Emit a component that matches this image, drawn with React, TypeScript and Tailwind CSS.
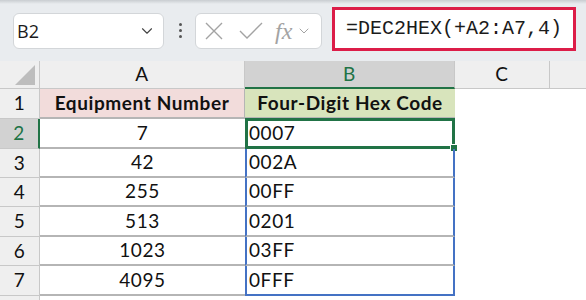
import { ChevronDown } from "lucide-react";

const rows = [
  { n: 2, a: "7", b: "0007", h: "h-[30px]" },
  { n: 3, a: "42", b: "002A", h: "h-[29px]" },
  { n: 4, a: "255", b: "00FF", h: "h-[29px]" },
  { n: 5, a: "513", b: "0201", h: "h-[30px]" },
  { n: 6, a: "1023", b: "03FF", h: "h-[29px]" },
  { n: 7, a: "4095", b: "0FFF", h: "h-[30px]" },
];

const cellFont = "font-['Lato','Liberation_Sans',sans-serif] text-[19px] tracking-[0.6px] text-[#111]";

export default function App() {
  return (
    <div className="w-[586px] h-[300px] overflow-hidden bg-white">
      {/* formula bar */}
      <div className="relative h-[61px] bg-[#e9ecef] flex items-start">
        <div className="absolute top-0 left-0 right-0 h-[4px] bg-gradient-to-b from-[#c9cdd1] to-[#e9ecef]" />
        <div className="ml-[13px] mt-[13px] w-[151px] h-[36px] bg-white border border-[#d3d6d9] rounded-[6px] flex items-center pl-[3px] pr-[7px]">
          <span className="font-['Open_Sans','Liberation_Sans',sans-serif] text-[18px] text-[#1b1b1b] flex-1">B2</span>
          <ChevronDown size={18} strokeWidth={1.5} className="text-[#444]" />
        </div>
        <div className="ml-[15px] mt-[23px] flex flex-col gap-[3px]">
          <span className="w-[3px] h-[3px] rounded-full bg-[#555]" />
          <span className="w-[3px] h-[3px] rounded-full bg-[#555]" />
          <span className="w-[3px] h-[3px] rounded-full bg-[#555]" />
        </div>
        <div className="ml-[13px] mt-[13px] w-[127px] h-[36px] bg-white border border-[#d3d6d9] rounded-[6px] flex items-center pl-[9px]">
          <svg width="18" height="18" viewBox="0 0 18 18" className="mr-[16px]">
            <path d="M1 1 L17 17 M17 1 L1 17" stroke="#a3a3a3" strokeWidth="1.4" fill="none" />
          </svg>
          <svg width="24" height="18" viewBox="0 0 24 18" className="mr-[12px]">
            <path d="M1 9 L8 16 L23 1" stroke="#a3a3a3" strokeWidth="1.4" fill="none" />
          </svg>
          <span className="font-['Liberation_Serif',serif] italic text-[24px] text-[#a3a3a3] leading-none mr-[4px]">fx</span>
          <ChevronDown size={16} strokeWidth={1.5} className="text-[#a3a3a3]" />
        </div>
        <div className="ml-[10px] mt-[7px] w-[244px] h-[44px] border-[3px] border-[#dc1d48] bg-white flex items-center pl-[11px]">
          <span className="font-['Liberation_Mono',monospace] text-[20px] text-[#1b1b1b]">=DEC2HEX(+A2:A7,4)</span>
        </div>
      </div>

      {/* column headers */}
      <div className={`flex h-[28px] bg-[#efefef] border-b border-[#c8c8c8] ${cellFont}`}>
        <div className="w-[40px] border-r border-[#c8c8c8] flex items-end justify-end pr-[4px] pb-[3px]">
          <svg width="20" height="20" viewBox="0 0 20 20">
            <path d="M20 0 L20 20 L0 20 Z" fill="#bdbdbd" />
          </svg>
        </div>
        <div className="w-[205px] border-r border-[#c8c8c8] flex items-center justify-center">A</div>
        <div className="w-[210px] bg-[#d2d2d2] border-r border-[#c8c8c8] border-b-2 border-b-[#217346] -mb-px flex items-center justify-center text-[#217346]">B</div>
        <div className="w-[95px] border-r border-[#c8c8c8] flex items-center justify-center">C</div>
        <div className="flex-1" />
      </div>

      {/* row 1 */}
      <div className={`flex h-[30px] ${cellFont}`}>
        <div className="w-[40px] bg-[#efefef] border-r border-b border-[#c8c8c8] flex items-center justify-center">1</div>
        <div className="w-[205px] bg-[#f2dcdb] border-b-2 border-r border-[#b5b5b5] flex items-center justify-center font-bold">Equipment Number</div>
        <div className="w-[210px] bg-[#d8e4bc] border-b-2 border-[#b5b5b5] flex items-center justify-center font-bold">Four-Digit Hex Code</div>
        <div className="flex-1" />
      </div>

      {rows.map((r) => {
        const active = r.n === 2;
        return (
          <div key={r.n} className={`flex ${r.h} ${cellFont}`}>
            <div
              className={`w-[40px] border-b border-[#c8c8c8] flex items-center justify-center ${
                active ? "bg-[#d2d2d2] text-[#217346] border-r-2 border-r-[#217346]" : "bg-[#efefef] border-r"
              }`}
            >
              {r.n}
            </div>
            <div className="w-[205px] border-b-2 border-[#b5b5b5] flex items-center justify-center">{r.a}</div>
            <div
              className={`relative w-[210px] border-x-2 border-x-[#4472c4] border-b-2 flex items-center pl-[2px] ${
                r.n === 7 ? "border-b-[#4472c4]" : "border-b-[#b5b5b5]"
              }`}
            >
              {r.b}
              {active && (
                <>
                  <div className="absolute -left-[2px] -right-[2px] -top-[1px] -bottom-[2px] border-[3px] border-[#217346]" />
                  <div className="absolute -right-[5px] -bottom-[5px] w-[8px] h-[8px] bg-[#217346] border border-white" />
                </>
              )}
            </div>
            <div className="flex-1" />
          </div>
        );
      })}

      <div className="flex h-[10px]">
        <div className="w-[40px] bg-[#efefef] border-r border-[#c8c8c8]" />
      </div>
    </div>
  );
}
